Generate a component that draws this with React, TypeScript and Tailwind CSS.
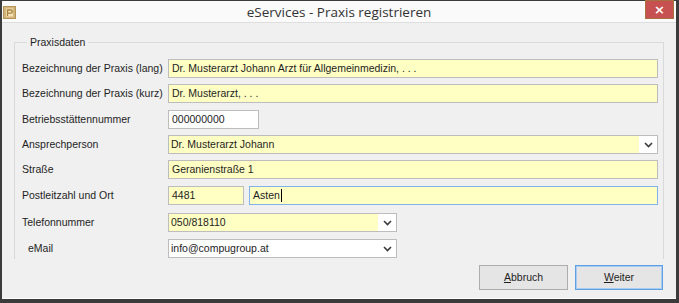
import React from 'react'

const Chevron = () => (
  <svg width="9" height="6" viewBox="0 0 9 6" className="shrink-0">
    <path d="M1 1l3.5 3.5L8 1" fill="none" stroke="#3a3a3a" strokeWidth="1.6" />
  </svg>
)

const AppIcon = () => (
  <svg width="13" height="13" viewBox="0 0 13 13">
    <rect x="0.5" y="0.5" width="12" height="12" fill="#d2b57c" stroke="#b39256" />
    <rect x="3" y="2.5" width="7" height="8" fill="#f4e3b6" />
    <path d="M4.5 10V4h3.2a1.6 1.6 0 0 1 0 3.2H4.5" fill="none" stroke="#a9823f" strokeWidth="1.3" />
  </svg>
)

interface RowProps {
  label: string
  mt: string
  indent?: boolean
  children: React.ReactNode
}

const Row: React.FC<RowProps> = ({ label, mt, indent, children }) => (
  <div className={`flex items-center h-[19px] ${mt}`}>
    <div className={`w-[146px] shrink-0 whitespace-nowrap ${indent ? 'pl-[6px]' : ''}`}>{label}</div>
    {children}
  </div>
)

const TextBox: React.FC<{ value: string; className?: string; white?: boolean; focus?: boolean; caret?: boolean }> = ({
  value,
  className = '',
  white,
  focus,
  caret,
}) => (
  <div
    className={`h-[19px] border flex items-center pl-[3px] whitespace-nowrap overflow-hidden ${
      focus ? 'border-[#7eb4ea]' : 'border-[#bdbdbd]'
    } ${white ? 'bg-white' : 'bg-[#ffffc4]'} ${className}`}
  >
    {value}
    {caret && <span className="inline-block w-px h-[13px] ml-px bg-black" />}
  </div>
)

const Combo: React.FC<{ value: string; className?: string; white?: boolean }> = ({ value, className = '', white }) => (
  <div className={`h-[19px] border border-[#bdbdbd] bg-white flex ${className}`}>
    <div
      className={`flex-1 flex items-center pl-[2px] whitespace-nowrap overflow-hidden ${
        white ? 'bg-white' : 'bg-[#ffffc4]'
      }`}
    >
      {value}
    </div>
    <div className="w-[18px] flex items-center justify-center">
      <Chevron />
    </div>
  </div>
)

export default function App() {
  return (
    <div className="w-[679px] h-[303px] flex flex-col border-t border-l-2 border-r-[3px] border-b-[4px] border-[#3b3b3b] font-['Liberation_Sans',Arial,sans-serif] text-[10.5px] text-[#1e1e1e]">
      <div className="h-[21px] shrink-0 bg-[#fafafa] grid grid-cols-[1fr_auto_1fr] items-center">
        <div className="pl-[1px] pt-[2px] flex items-center">
          <AppIcon />
        </div>
        <div className="font-['Open_Sans',sans-serif] text-[13.5px] text-[#333333] leading-none pt-[2px]">
          eServices - Praxis registrieren
        </div>
        <div className="flex justify-end self-start">
          <div className="w-[29px] h-[19px] mr-[2px] -mt-px bg-[#c75050] border border-[#a8703f] flex items-center justify-center text-white text-[13px] font-bold leading-none font-['DejaVu_Sans',sans-serif]">
            ×
          </div>
        </div>
      </div>

      <div className="flex-1 flex flex-col bg-[#f0f0f0] border-t border-[#dedede] border-b border-b-white px-[12px] pt-[13px]">
        <fieldset className="border-x border-t border-[#d9d9d9] pl-[7px] pr-[5px] pb-[1px]">
          <legend className="ml-[5px] px-[3px] leading-[12px]">Praxisdaten</legend>

          <Row label="Bezeichnung der Praxis (lang)" mt="mt-[11px]">
            <TextBox value="Dr. Musterarzt Johann Arzt für Allgemeinmedizin, . . ." className="flex-1" />
          </Row>
          <Row label="Bezeichnung der Praxis (kurz)" mt="mt-[6px]">
            <TextBox value="Dr. Musterarzt, . . ." className="flex-1" />
          </Row>
          <Row label="Betriebsstättennummer" mt="mt-[7px]">
            <TextBox value="000000000" white className="w-[91px]" />
          </Row>
          <Row label="Ansprechperson" mt="mt-[6px]">
            <Combo value="Dr. Musterarzt Johann" className="flex-1" />
          </Row>
          <Row label="Straße" mt="mt-[6px]">
            <TextBox value="Geranienstraße 1" className="flex-1" />
          </Row>
          <Row label="Postleitzahl und Ort" mt="mt-[7px]">
            <div className="flex-1 flex gap-[5px]">
              <TextBox value="4481" className="w-[76px]" />
              <TextBox value="Asten" focus caret className="flex-1" />
            </div>
          </Row>
          <Row label="Telefonnummer" mt="mt-[8px]">
            <Combo value="050/818110" className="w-[229px]" />
          </Row>
          <Row label="eMail" indent mt="mt-[7px]">
            <Combo value="info@compugroup.at" white className="w-[229px]" />
          </Row>
        </fieldset>

        <div className="flex justify-end gap-[7px] mt-[6px] pr-[1px]">
          <button className="w-[89px] h-[25px] border border-[#adadad] bg-[#e5e5e5] text-[#1e1e1e]">
            <span className="underline">A</span>bbruch
          </button>
          <button className="w-[88px] h-[25px] border border-[#5ea1e3] bg-[#e5e5e5] shadow-[inset_0_0_0_1px_#a9cdf2] text-[#1e1e1e]">
            <span className="underline">W</span>eiter
          </button>
        </div>
      </div>
    </div>
  )
}
